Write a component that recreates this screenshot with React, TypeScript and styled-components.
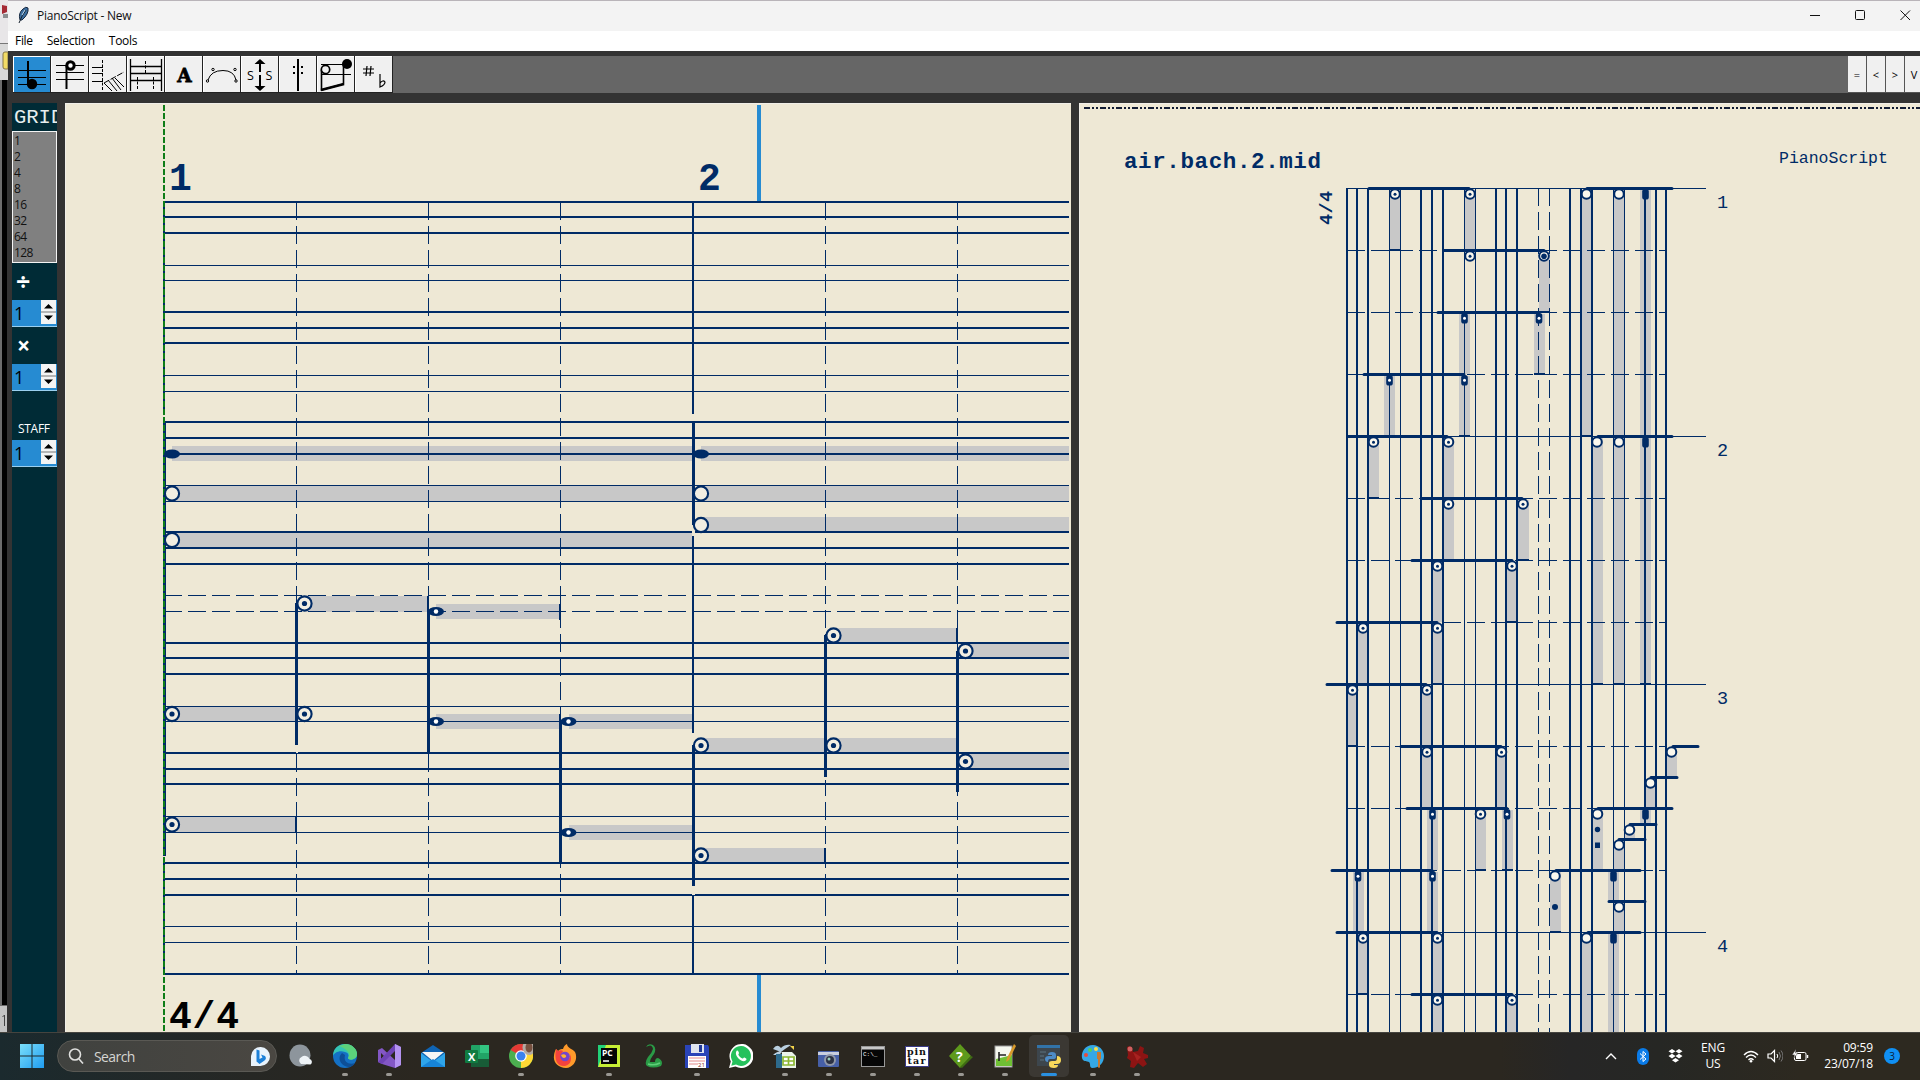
import React from "react";
import styled, { createGlobalStyle, css } from "styled-components";

const INK = "#002b66";
const PAPER = "#eee8d5";
const SHADE = "#c8c8c8";
const UI = `"Open Sans", "Noto Sans", sans-serif`;
const MONO = `"Liberation Mono", monospace`;

const Global = createGlobalStyle`
  *{box-sizing:border-box}
  html,body{margin:0;padding:0;overflow:hidden;background:#000}
  svg{display:block}
`;

const Desktop = styled.div`
  width: 1920px;
  height: 1080px;
  display: flex;
  flex-direction: column;
  font-family: ${UI};
  overflow: hidden;
`;
const Workspace = styled.div`
  height: 1032px;
  flex: none;
  display: flex;
`;
const BehindStrip = styled.div`
  width: 8px;
  flex: none;
  display: flex;
  flex-direction: column;
  background: #d9d9d9;
`;
const AppWindow = styled.div`
  flex: 1;
  min-width: 0;
  display: flex;
  flex-direction: column;
  background: #333;
  overflow: hidden;
`;
const TitleBar = styled.header`
  height: 31px;
  flex: none;
  display: flex;
  align-items: center;
  margin-right: -8px;
  padding: 0 0 2px 8px;
  background: #f3f3f3;
  border-top: 1px solid #b9b4b9;
  font-size: 12px;
  color: #111;
`;
const TitleText = styled.span`
  flex: 1;
  margin-left: 6px;
  letter-spacing: -0.25px;
`;
const WindowButton = styled.span`
  width: 45px;
  display: flex;
  justify-content: center;
`;
const MenuBar = styled.nav`
  height: 20px;
  flex: none;
  display: flex;
  align-items: center;
  gap: 14px;
  padding: 0 0 1px 7px;
  background: #fff;
  font-size: 12px;
  letter-spacing: -0.3px;
  color: #000;
`;
const ToolRow = styled.div`
  height: 52px;
  flex: none;
  display: flex;
  margin-right: -4px;
  padding: 5px 0 10px 5px;
`;
const ToolStrip = styled.div`
  flex: 1;
  display: flex;
  background: #666;
`;
const ToolButton = styled.button<{ $active?: boolean }>`
  width: 38px;
  height: 37px;
  padding: 0;
  border: 0;
  border-right: 1px solid #222;
  border-bottom: 1px solid #222;
  box-shadow: inset 1px 1px 0 #fff;
  background: ${(p) => (p.$active ? "#268bd2" : "#f0f0f0")};
`;
const Spacer = styled.div`
  flex: 1;
`;
const NarrowButton = styled.button`
  width: 19px;
  height: 37px;
  padding: 0;
  border: 0;
  border-right: 1px solid #555;
  border-bottom: 1px solid #555;
  background: #f0f0f0;
  font: 11px ${UI};
  color: #000;
  flex: none;
`;
const Body = styled.div`
  flex: 1;
  min-height: 0;
  display: flex;
  padding-left: 4px;
`;
const SidePanel = styled.aside`
  width: 45px;
  flex: none;
  overflow: hidden;
  display: flex;
  flex-direction: column;
  background: #002b36;
  color: #fff;
`;
const GridTitle = styled.div`
  height: 28px;
  flex: none;
  padding-left: 2px;
  font: 20.5px/29px ${MONO};
  color: #e6eeee;
  white-space: nowrap;
`;
const GridList = styled.div`
  height: 132px;
  flex: none;
  padding: 1px 0 0 1px;
  border: 1px solid #f4f4f4;
  background: #808080;
  font-size: 12px;
  line-height: 16px;
  letter-spacing: -0.6px;
  color: #111;
`;
const SideLabel = styled.div<{ $h: number; $size: number; $bold?: boolean; $pad: number; $top?: number }>`
  height: ${(p) => p.$h}px;
  flex: none;
  padding: ${(p) => p.$top ?? 0}px 0 0 ${(p) => p.$pad}px;
  font: ${(p) => (p.$bold ? 700 : 400)} ${(p) => p.$size}px/${(p) => p.$h - (p.$top ?? 0)}px ${UI};
  letter-spacing: ${(p) => (p.$bold ? 0 : -0.3)}px;
`;
const SpinBox = styled.div`
  height: 27px;
  flex: none;
  display: flex;
  padding-right: 1px;
  border-bottom: 1px solid #9bd0f0;
  background: #268bd2;
  color: #000;
`;
const SpinValue = styled.span`
  flex: 1;
  padding-left: 2px;
  font-size: 18px;
  line-height: 26px;
`;
const SpinArrows = styled.span`
  width: 15px;
  margin-bottom: 2px;
  display: flex;
  background: #f4f4f4;
`;
const Divider = styled.div<{ $w: number }>`
  width: ${(p) => p.$w}px;
  flex: none;
  background: #333;
`;
const Canvas = styled.div<{ $w: number }>`
  width: ${(p) => p.$w}px;
  height: 929px;
  flex: none;
  background: ${PAPER};
  box-shadow: inset 0 1px 0 #f0eee8, inset 1px 0 0 #f0eee8;
`;

const Taskbar = styled.footer`
  height: 48px;
  flex: none;
  display: flex;
  align-items: center;
  padding: 0 0 1px 10px;
  border-top: 1px solid #45443f;
  background: linear-gradient(90deg, #1b2a2e 0, #262724 250px, #2b2720 420px, #2b2720 1500px, #262626 1570px, #262724 1660px, #2d2920 1800px);
  color: #fff;
`;
const Slot = styled.div<{ $active?: boolean; $running?: boolean }>`
  width: 44px;
  height: 46px;
  flex: none;
  display: flex;
  flex-direction: column;
  align-items: center;
  padding-top: 11px;
  border-radius: 5px;
  ${(p) => p.$active && css`
    width: 40px;
    height: 42px;
    margin: 0 2px;
    padding-top: 9px;
    background: #3b3833;
  `}
`;
const Indicator = styled.i<{ $active?: boolean }>`
  width: ${(p) => (p.$active ? 16 : 6)}px;
  height: 3px;
  margin-top: 5px;
  flex: none;
  border-radius: 2px;
  background: ${(p) => (p.$active ? "#2a90e0" : "#9a9893")};
`;
const SearchPill = styled.div`
  width: 220px;
  height: 32px;
  margin: 0 2px 0 3px;
  flex: none;
  display: flex;
  align-items: center;
  padding: 0 5px 0 10px;
  border: 1px solid #5a5954;
  border-radius: 16px;
  background: linear-gradient(90deg, #40423f, #4a4742);
  font-size: 14px;
  letter-spacing: -0.6px;
  color: #d6d5d2;
`;
const SearchText = styled.span`
  flex: 1;
  margin-left: 10px;
`;
const Tray = styled.div`
  margin-left: auto;
  display: flex;
  align-items: center;
  padding-right: 20px;
`;
const TrayCell = styled.div<{ $w: number }>`
  width: ${(p) => p.$w}px;
  display: flex;
  justify-content: center;
`;
const TwoLines = styled.div<{ $w: number; $right?: boolean }>`
  width: ${(p) => p.$w}px;
  font-size: 12px;
  line-height: 16px;
  letter-spacing: -0.15px;
  text-align: ${(p) => (p.$right ? "right" : "center")};
`;
const Badge = styled.div`
  width: 16px;
  height: 16px;
  margin-left: 11px;
  border-radius: 50%;
  background: #1090f4;
  color: #0b2038;
  font-size: 10px;
  line-height: 16px;
  text-align: center;
`;

/* ---------- editor canvas ---------- */
const THICK = [202, 217, 233, 312, 328, 343, 422, 438, 454, 532, 548, 564, 643, 658, 674, 753, 769, 784, 863, 879, 895, 974];
const THIN = [265, 280, 375, 391, 485, 501, 706, 721, 816, 832, 926, 942];

type Kind = "open" | "dot" | "black" | "blackdot" | "big";
type EdNote = { x: number; y: number; end?: number; k: Kind; mark?: boolean };
const ED: EdNote[] = [
  { x: 172, y: 454, end: 692, k: "black" },
  { x: 701, y: 454, end: 1069, k: "black" },
  { x: 172, y: 493.5, end: 692, k: "open" },
  { x: 701, y: 493.5, end: 1069, k: "open" },
  { x: 172, y: 540, end: 692, k: "open" },
  { x: 701, y: 525, end: 1069, k: "open" },
  { x: 304.5, y: 603.5, end: 428, k: "dot", mark: true },
  { x: 304.5, y: 714, k: "dot" },
  { x: 172, y: 714, end: 296, k: "dot" },
  { x: 172, y: 824.5, end: 296, k: "dot", mark: true },
  { x: 436, y: 611.5, end: 560, k: "blackdot", mark: true },
  { x: 436, y: 721.5, end: 560, k: "blackdot", mark: true },
  { x: 568.5, y: 721.5, end: 692, k: "blackdot" },
  { x: 568.5, y: 832.5, end: 692, k: "blackdot" },
  { x: 701, y: 745.5, end: 825, k: "dot" },
  { x: 701, y: 855.5, end: 825, k: "dot", mark: true },
  { x: 833.5, y: 635.5, end: 957, k: "dot", mark: true },
  { x: 833.5, y: 745.5, end: 957, k: "dot" },
  { x: 965.5, y: 651, end: 1069, k: "dot" },
  { x: 965.5, y: 761.5, end: 1069, k: "dot" },
];
const STEMS: [number, number, number][] = [
  [296.5, 603, 745], [428.5, 611, 753], [560.5, 721, 863],
  [693.5, 422, 525], [693.5, 745, 886], [825.5, 635, 777], [957.5, 651, 792],
];

const EditorScore = () => (
  <svg width="1006" height="929" viewBox="65 103 1006 929">
    <g shapeRendering="crispEdges">
      {ED.filter((n) => n.end).map((n, i) => (
        <rect key={i} x={n.x} y={Math.round(n.y - 8)} width={n.end! - n.x} height={n.k.startsWith("black") ? 15 : 16} fill={SHADE} />
      ))}
      {THICK.map((y) => <rect key={y} x="164" y={y - 1} width="905" height="2" fill={INK} />)}
      {THIN.map((y) => <rect key={y} x="164" y={y} width="905" height="1" fill={INK} />)}
      {[595.5, 611.5].map((y) => (
        <g key={y} stroke={INK} strokeDasharray="18 6">
          <line x1="164" x2="693" y1={y} y2={y} />
          <line x1="693" x2="1069" y1={y} y2={y} />
        </g>
      ))}
      {[296.5, 428.5, 560.5, 825.5, 957.5].map((x) => (
        <line key={x} x1={x} x2={x} y1="202" y2="974" stroke={INK} strokeDasharray="18 6" />
      ))}
      <path d="M693 202V974M164 202V974" stroke={INK} strokeWidth="2" />
      <path d="M693 414V421M693 525V536M693 733V745M693 886V895M164 414V421M164 856V861" stroke={PAPER} strokeWidth="3" />
      <path d="M296.5 745V753M825.5 777V780" stroke={PAPER} strokeWidth="2" />
      {STEMS.map(([x, a, b], i) => <rect key={i} x={x - 1.5} y={a} width="3" height={b - a} fill={INK} />)}
      <rect x="163" y="422" width="2" height="434" fill={INK} />
      {ED.filter((n) => n.mark).map((n, i) => (
        <rect key={i} x={n.end! - 1} y={n.y - 8} width="2" height="16" fill={INK} />
      ))}
      <line x1="164" x2="164" y1="105" y2="1032" stroke="#0f7d18" strokeWidth="2" strokeDasharray="6 2" />
      <rect x="165" y="422" width="1" height="434" fill={INK} />
      <rect x="757" y="105" width="4" height="96" fill="#268bd2" />
      <rect x="757" y="975" width="4" height="57" fill="#268bd2" />
    </g>
    {ED.map((n, i) =>
      n.k.startsWith("black") ? (
        <g key={i}>
          <ellipse cx={n.x} cy={n.y} rx="8" ry="4.6" fill={INK} />
          {n.k === "blackdot" && <circle cx={n.x} cy={n.y} r="2.2" fill="#fff" />}
        </g>
      ) : (
        <g key={i}>
          <circle cx={n.x} cy={n.y} r="7.1" fill="#f2eee2" stroke={INK} strokeWidth="2.1" />
          {n.k === "dot" && <circle cx={n.x} cy={n.y} r="2.6" fill={INK} />}
        </g>
      )
    )}
    <g fontFamily={MONO} fontWeight="700" fontSize="38">
      <text x="169" y="190" fill={INK}>1</text>
      <text x="698" y="190" fill={INK}>2</text>
      <text x="169" y="1028" fill="#000" textLength="70">4/4</text>
    </g>
  </svg>
);

/* ---------- print preview ---------- */
const V2 = [1347, 1357, 1368, 1421, 1432, 1443, 1496, 1506, 1517, 1570, 1581, 1592, 1645, 1656, 1666];
const V1 = [1389, 1400, 1464, 1475, 1613, 1624];
/* beams: y, from, to */
const BEAMS: [number, number, number][] = [
  [188, 1368, 1470], [188, 1586, 1673], [250, 1443, 1545], [312, 1437, 1539], [374, 1363, 1465],
  [436, 1347, 1448], [436, 1597, 1673], [498, 1421, 1523], [560, 1411, 1513], [622, 1336, 1438],
  [684, 1326, 1427], [746, 1400, 1502], [746, 1672, 1699], [777, 1650, 1678], [808, 1406, 1508],
  [808, 1597, 1673], [824, 1629, 1657], [839, 1618, 1646], [870, 1331, 1433], [870, 1555, 1641],
  [901, 1608, 1646], [932, 1336, 1438], [932, 1587, 1641], [994, 1411, 1513],
];
/* notes: x, y, shade end (0 = none), kind, end mark */
const PN: [number, number, number, Kind, number?][] = [
  [1395, 188, 250, "dot", 1], [1470, 188, 250, "dot"], [1586.5, 188, 436, "open", 1], [1619, 188, 436, "open"], [1645.5, 188, 436, "black"],
  [1470, 250, 0, "dot"], [1544, 250, 312, "big", 1],
  [1464.5, 312, 374, "blackdot"], [1539, 312, 374, "blackdot", 1],
  [1389.5, 374, 436, "blackdot"], [1464.5, 374, 436, "blackdot", 1],
  [1373.5, 436, 498, "dot", 1], [1448.5, 436, 498, "dot"], [1597, 436, 684, "open", 1], [1619, 436, 684, "open", 1], [1645.5, 436, 684, "black", 1],
  [1448.5, 498, 560, "dot"], [1523, 498, 560, "dot", 1],
  [1437.5, 560, 622, "dot"], [1512, 560, 622, "dot", 1],
  [1363, 622, 684, "dot"], [1437.5, 622, 684, "dot", 1],
  [1352.5, 684, 746, "dot", 1], [1427, 684, 746, "dot"],
  [1427, 746, 808, "dot"], [1501.5, 746, 808, "dot"], [1671.5, 746, 777, "open"],
  [1650.5, 777, 808, "open"],
  [1432.5, 808, 870, "blackdot"], [1480.5, 808, 870, "dot", 1], [1507, 808, 870, "blackdot", 1], [1597.5, 808, 870, "open"], [1645.5, 808, 823, "black"],
  [1629.5, 824, 839, "open"], [1619, 839, 870, "open"],
  [1358, 870, 932, "blackdot"], [1432.5, 870, 932, "blackdot"], [1555, 870, 932, "open", 1], [1613.5, 870, 901, "black"],
  [1619, 901, 932, "open"],
  [1363, 932, 994, "dot", 1], [1437.5, 932, 994, "dot"], [1586.5, 932, 1032, "open"], [1613.5, 932, 1032, "black"],
  [1437.5, 994, 1032, "dot"], [1512, 994, 1032, "dot"],
];

const PreviewScore = () => (
  <svg width="841" height="929" viewBox="1079 103 841 929">
    <g shapeRendering="crispEdges">
      {PN.filter((n) => n[2]).map(([x, y, e], i) => (
        <rect key={i} x={Math.round(x - 5.5)} y={y + 2} width="10.5" height={e - y - 2} fill={SHADE} />
      ))}
      {V2.map((x) => <rect key={x} x={x - 1} y="188" width="2" height="844" fill={INK} />)}
      {V1.map((x) => <rect key={x} x={x} y="188" width="1" height="844" fill={INK} />)}
      {[1538.5, 1549.5].map((x) => <line key={x} x1={x} x2={x} y1="188" y2="1032" stroke={INK} strokeDasharray="18 6" />)}
      {[188.5, 436.5, 684.5, 932.5].map((y) => <line key={y} x1="1347" x2="1706" y1={y} y2={y} stroke={INK} />)}
      {[250.5, 312.5, 374.5, 498.5, 560.5, 622.5, 746.5, 808.5, 870.5, 994.5].map((y) => (
        <line key={y} x1="1347" x2="1667" y1={y} y2={y} stroke={INK} strokeDasharray="18 6" />
      ))}
      {PN.filter((n) => n[4]).map(([x, , e], i) => (
        <rect key={i} x={Math.round(x - 5.5)} y={e - 1} width="10.5" height="2" fill={INK} />
      ))}
      <line x1="1084" x2="1920" y1="108" y2="108" stroke="#111b33" strokeWidth="2" strokeDasharray="6 2 2 2 2 2" />
    </g>
    <path d={BEAMS.map(([y, a, b]) => `M${a + 1} ${y + 0.5}H${b - 1}`).join("")} stroke={INK} strokeWidth="3" strokeLinecap="round" fill="none" />
    {PN.map(([x, y, , k], i) => (
      <g key={i}>
        {k.startsWith("black") ? (
          <rect x={x - 3.3} y={y + 1} width="6.6" height="10.5" rx={2.6} fill={INK} />
        ) : (
          <circle cx={x} cy={y + 6} r="4.8" fill="#fbf8ee" stroke={INK} strokeWidth="2" />
        )}
        {k === "dot" && <circle cx={x} cy={y + 6.2} r="1.5" fill={INK} />}
        {k === "big" && <circle cx={x} cy={y + 6.2} r="2.8" fill={INK} />}
        {k === "blackdot" && <circle cx={x} cy={y + 6.3} r="1.5" fill="#fff" />}
      </g>
    ))}
    <circle cx="1597.5" cy="829.5" r="2.7" fill={INK} />
    <rect x="1595" y="842.5" width="5" height="5.5" fill={INK} />
    <circle cx="1555" cy="907" r="3" fill={INK} />
    <g fontFamily={MONO} fill={INK}>
      <text x="1124" y="168" fontWeight="700" fontSize="22.5" textLength="197">air.bach.2.mid</text>
      <text x="1779" y="163" fontSize="16.5">PianoScript</text>
      <text transform="translate(1331.5 225) rotate(-90)" fontWeight="700" fontSize="18.5" textLength="34">4/4</text>
      {[1, 2, 3, 4].map((n) => <text key={n} x="1717" y={207.5 + (n - 1) * 248} fontSize="18.5">{n}</text>)}
    </g>
  </svg>
);

/* ---------- toolbar glyphs ---------- */
const TOOL_ART: React.ReactNode[] = [
  <g key="0"><path d="M5 14.5H33M5 21.5H33M5 28.5H33" stroke="#000" /><path d="M15 5V28" stroke="#000" strokeWidth="2" /><circle cx="19" cy="28" r="5.2" /></g>,
  <g key="1"><path d="M5 9.5H33M5 16.5H33M5 23.5H33" stroke="#000" /><path d="M15.5 9V33" stroke="#000" strokeWidth="2" /><circle cx="19.5" cy="9.5" r="3.7" fill="#fff" stroke="#000" strokeWidth="3" /></g>,
  <g key="2" stroke="#000"><path d="M3 11.5H14M3 17.5H14M3 25.5H14" /><path d="M13.5 4V35" strokeDasharray="3 1.5" /><path d="M15 27L23 35M19 24L28 35M23 22L32 34M26 22L35 31" /><path d="M15 27L35 16" strokeDasharray="6 1.5" /></g>,
  <g key="3" stroke="#000"><path d="M3.5 3V35M34.5 3V35" strokeWidth="1.3" /><path d="M4 10.5H35M4 17.5H35M4 24.5H35" strokeWidth="1.4" /><path d="M18.5 5V17M10.5 21V34M26.5 21V34" strokeDasharray="3 1.5" /></g>,
  <text key="4" x="19.5" y="25.5" textAnchor="middle" fontFamily={`"DejaVu Serif","Liberation Serif",serif`} fontWeight="700" fontSize="18.5" stroke="#000" strokeWidth="0.8">A</text>,
  <g key="5" fill="none" stroke="#000"><path d="M5 24Q8 14.5 20 14.5Q31 14.5 33 24" /><circle cx="4.5" cy="25" r="1.2" /><circle cx="10" cy="13.5" r="1.2" /><circle cx="32" cy="13.5" r="1.2" /><circle cx="33" cy="25" r="1.2" /></g>,
  <g key="6"><path d="M19 5V16M19 19V33" stroke="#000" strokeWidth="2" /><path d="M13.5 8L19 3L24.5 8ZM13.5 30L19 35L24.5 30Z" /><text x="6" y="24" fontFamily={UI} fontSize="12.500">S</text><text x="24.500" y="24" fontFamily={UI} fontSize="12.500">S</text></g>,
  <g key="7"><path d="M19 3V35" stroke="#000" strokeWidth="2" /><path d="M14 10h2v2h-2zM14 16h2v2h-2zM22 10h2v2h-2zM22 16h2v2h-2z" /></g>,
  <g key="8"><path d="M4 8.5H33M4 18.5H34" stroke="#000" /><path d="M4.5 14V34L26.5 28V8" stroke="#000" strokeWidth="1.6" fill="none" /><path d="M4 34L27 28" stroke="#000" strokeWidth="2.8" /><circle cx="8.5" cy="13.5" r="4.2" fill="#f0f0f0" stroke="#000" strokeWidth="1.7" /><circle cx="30" cy="8" r="5" /></g>,
  <g key="9" fill="none" stroke="#000" strokeWidth="1.2"><path d="M12 10L11 20M16 10L15 20M8 13H19M8 17H19" /><path d="M25 18V31Q30 29 30 26Q28 23.5 25 27" /></g>,
];

/* ---------- taskbar icons ---------- */
const Icon = ({ children }: { children: React.ReactNode }) => <svg width="24" height="24" viewBox="0 0 24 24">{children}</svg>;

const APPS: { art: React.ReactNode; run?: boolean; active?: boolean }[] = [
  { art: <><ellipse cx="11" cy="11.5" rx="10.5" ry="11" fill="#8d959c" /><path d="M12 20a4 4 0 01.5-7 5 5 0 018 2 3 3 0 011 5.5z" fill="#eef3f7" /></> },
  { run: true, art: <><circle cx="12" cy="12" r="12" fill="#1470c4" /><path d="M0 12C0 4 6 0 12 0c7 0 12 5 12 10 0 6-8 7-9 4 1-2 1-5-3-6C6 6 1 9 0 12z" fill="#35c5b4" /><path d="M12 0c7 0 12 5 12 10 0 6-8 7-9 4 2-3 1-5 0-6C13 5 9 3 6 2z" fill="#5cd27b" /><path d="M9 9c-6 6 0 14 8 14 2-1 4-2 5-4-5 2-12 0-10-8z" fill="#0d4f97" /></> },
  { run: true, art: <><path d="M1 6l4-2 13 12V0l6 3v18l-6 3L5 20l-4-2z" fill="#8357c5" /><path d="M18 0l6 3v18l-6 3z" fill="#b493f0" /><path d="M4 9v6l3-3z" fill="#2b2720" /><path d="M1 18l17-18v7L5 20z" fill="#6e43b5" /></> },
  { art: <><path d="M0 9l12-8 12 8v14H0z" fill="#0f64b4" /><path d="M1 8h22L12 17z" fill="#f5f5f5" /><path d="M0 9l12 9 12-9v14H0z" fill="#2fa5ea" /><path d="M0 23l12-8 12 8z" fill="#1684d8" /></> },
  { art: <><rect x="6" y="1" width="18" height="22" rx="1" fill="#21a366" /><rect x="15" y="1" width="9" height="8" fill="#33c481" /><rect x="6" y="15" width="18" height="8" fill="#185c37" /><rect x="0" y="6" width="13" height="13" rx="1" fill="#107c41" /><text x="3" y="16.5" fontSize="11" fontWeight="700" fill="#fff" fontFamily={UI}>X</text></> },
  { run: true, art: <g><g><circle cx="12" cy="12" r="12" fill="#4caf50" /><path d="M12 12L1.6 6A12 12 0 0122.4 6z" fill="#e53935" /><path d="M12 12L22.4 6A12 12 0 0112 24z" fill="#fdd835" /><circle cx="12" cy="12" r="5.8" fill="#fff" /><circle cx="12" cy="12" r="4.5" fill="#3b82f0" /></g><ellipse cx="20" cy="3.500" rx="6.500" ry="7.500" fill="#b3aaa4" /><ellipse cx="20" cy="3.500" rx="3.500" ry="5" fill="#77503f" /></g> },
  { art: <><path d="M3 5l2 2c2-2 4-2 5-2 1-3 2-4 4-5 0 4 6 5 8 8 3 6 0 15-9 16C5 24 0 18 1 12c0-3 1-5 2-7z" fill="#ff9a2b" /><path d="M3 5l2 2c2-1 4-1 5 0l-2 4c3 0 3 3 1 4 4 4 9 0 8-5 3 7-1 12-6 12C4 22 1 16 3 5z" fill="#f5433d" /><circle cx="12" cy="12.5" r="4.8" fill="#7545c9" /><path d="M8 11c3-2 6 0 5 2-2 2-4 1-5-2z" fill="#ffb52c" /></> },
  { run: true, art: <><rect x="1" y="1" width="22" height="22" fill="#c6ee35" /><path d="M1 23L9 1H1z" fill="#22d278" /><rect x="4" y="4" width="16" height="16" fill="#050505" /><text x="5" y="12" fontSize="8.5" fontWeight="700" fill="#fff" fontFamily={UI}>PC</text><path d="M6 17h6" stroke="#fff" strokeWidth="1.5" /></> },
  { art: <><path d="M5 3Q11-1 12 5Q11 9 7 13Q3 19 6 22Q12 25 20 22Q23 17 17 14Q14 14 14 18H9Q9 15 13 10Q16 4 12 1Q7-1 5 3z" fill="#2a9b46" /><path d="M7 20Q13 22 19 19" stroke="#5fce78" strokeWidth="1.500" fill="none" /></> },
  { run: true, art: <><path d="M0 1h23l1 2v21H0z" fill="#2a44b8" /><rect x="6" y="0" width="13" height="9" fill="#dfe4ee" /><rect x="14" y="1" width="3" height="7" fill="#223a96" /><rect x="3" y="12" width="18" height="12" fill="#fff" /><path d="M4 14h16M4 17h16M4 20h9" stroke="#e58b8b" strokeWidth="1.2" /><text x="13" y="23" fontSize="6" fill="#822" fontFamily={UI}>21</text></> },
  { art: <><path d="M0 24l1.8-6.500A12 12 0 1112 24a12 12 0 01-5.500-1.500z" fill="#fff" /><path d="M2.300 21.700l1.200-4.300A10 10 0 1112 22a10 10 0 01-5-1.400z" fill="#25c15c" /><path d="M7.500 7c1-1 2 0 2.500 2 0 1-1 1-.5 2 1 2 2.500 3 4 3.500 1 0 1-1.500 2-1 2 1 2.500 1.500 1.500 2.800-2 2-5 .7-7-1.200C7.500 12.500 6 9.500 7.500 7z" fill="#fff" /></> },
  { run: true, art: <><path d="M0 5Q4-1 8 4Q12 0 18 1L12 5L8 8zM0 11q5-5 9-3L6 11z" fill="#b9cfe0" /><path d="M3 10h6v14H3z" fill="#2d6a8c" /><path d="M9 8h10l4 4v12H9z" fill="#eaf3ea" /><path d="M10 13h11v8H10zM10 17h11M15.500 13v8" fill="#fff" stroke="#8cb833" strokeWidth="1.700" /><path d="M17 2h4v4z" fill="#f3d34b" /></> },
  { run: true, art: <><rect x="1" y="7" width="21" height="16" rx="1" fill="#465fa7" /><rect x="1" y="8" width="21" height="3" fill="#c9cede" /><circle cx="13" cy="16" r="6" fill="#8f97a8" /><circle cx="13" cy="16" r="4" fill="#2c3144" /><circle cx="12" cy="15" r="1.500" fill="#9cb" /></> },
  { run: true, art: <><rect x="0.500" y="2.500" width="23" height="20" fill="#060606" stroke="#999" /><rect x="1" y="3" width="22" height="2.500" fill="#c8c8c8" /><text x="2" y="12" fontSize="6" fill="#fff" fontFamily={MONO}>C:\_</text></> },
  { run: true, art: <><rect x="0.500" y="2.500" width="23" height="20" fill="#fff" stroke="#3a3a88" /><g fontFamily={`"DejaVu Serif",serif`} fontSize="9.500" fontWeight="700" fill="#111"><text x="2" y="10.500" textLength="19">pin</text><text x="2.500" y="20" textLength="18">tar</text></g></> },
  { run: true, art: <><path d="M11 0l11 12-11 12L0 12z" fill="#5e9a1c" /><path d="M22 12l2 1-11 11-2-1z" fill="#3f6d13" /><text x="7" y="17.500" fontSize="14" fontWeight="700" fill="#fff" fontFamily={UI}>?</text></> },
  { run: true, art: <><rect x="2" y="2" width="17" height="21" fill="#f4f6ee" stroke="#999" /><path d="M3 15l16-4v11H3z" fill="#6fc034" /><path d="M6 8v9M6 11h7" stroke="#222" strokeWidth="1.600" /><path d="M21 0l2 2-7 14-3 2 1-4z" fill="#d99a2b" /></> },
  { active: true, art: <><rect x="0" y="1" width="23" height="21" fill="#3d464d" /><rect x="0" y="1" width="23" height="3" fill="#3273a8" /><path d="M3 8h6M3 12h4M3 16h4" stroke="#5d7280" /><path d="M8 15q0-3 4-3h3v-1h-4q0-3 4-3 4 0 4 3v2q0 2-3 2h-3q-2 0-2 3-3 0-3-3z" fill="#4d8cc8" /><path d="M20 12q4 0 4 4t-4 4h-3v1h4q0 3-4 3-5 0-5-3v-2q0-2 3-2h3q2 0 2-3z" fill="#f8d95b" /></> },
  { run: true, art: <><path d="M12 1C4 1 0 8 1 14c1 4 5 3 7 4 2 2 0 5 3 6 8 0 12-6 12-12S18 1 12 1z" fill="#35a8e6" /><circle cx="5" cy="11" r="2" fill="#e74c3c" /><circle cx="9" cy="6" r="2" fill="#57cf57" /><circle cx="15" cy="5" r="2" fill="#f8df4c" /><path d="M16 8h4v7h-1v8q-1 2-2 0v-8h-1z" fill="#c67a33" /></> },
  { run: true, art: <><path d="M2 3q3-2 5 1l1 4 5-1 2-5 4 2-1 5 5 2v3l-4 1 3 5-4 3-5-4-4 5-4-1 1-6-4-3 1-3z" fill="#8c1413" /><circle cx="5" cy="5" r="2.500" fill="#d06060" /><path d="M8 8l8 5-4 4z" fill="#a82220" /></> },
];

const Arrows = () => (
  <svg width="15" height="24"><path d="M3 8.500L7.500 4L12 8.500ZM3 15.500L7.500 20L12 15.500Z" /><path d="M0 12H15" stroke="#777" /></svg>
);
const Spinner = () => (
  <SpinBox><SpinValue>1</SpinValue><SpinArrows><Arrows /></SpinArrows></SpinBox>
);

export default function App() {
  return (
    <Desktop>
      <Global />
      <Workspace>
        <BehindStrip>
          <svg width="8" height="1032">
            <rect width="8" height="43" fill="#e8e6e8" />
            <path d="M2 5l5 1v6l-5 2z" fill="#a52a35" />
            <path d="M3 14h5v4H3z" fill="#8a8e90" />
            <path d="M0 43.500H8" stroke="#777" />
            <path d="M8 52H5q-2 0-2 2v13q0 2 2 2h3z" fill="#f2dc66" stroke="#85784a" />
            <rect y="80" width="8" height="952" fill="#6c6c6c" />
            <rect x="2" y="80" width="5" height="925" fill="#000" />
            <rect x="7" y="80" width="1" height="952" fill="#333" />
            <rect y="1006" width="7" height="26" fill="#c4c4c4" />
            <path d="M4.500 1015V1026M2.500 1017L4.500 1015" stroke="#444" fill="none" />
          </svg>
        </BehindStrip>
        <AppWindow>
          <TitleBar>
            <svg width="15" height="18" viewBox="0 0 15 18"><path d="M4 14Q2 7 7 3Q10 0 12 2Q13 8 6 14z" fill="#3d6e9e" stroke="#15273e" /><path d="M3 17Q6 9 10 4" stroke="#15202c" fill="none" /><path d="M6 9L9 4" stroke="#b8d7ef" /></svg>
            <TitleText>PianoScript - New</TitleText>
            <WindowButton><svg width="11" height="11"><path d="M0 5.500H10" stroke="#111" /></svg></WindowButton>
            <WindowButton><svg width="11" height="11"><rect x="0.500" y="0.500" width="9" height="9" rx="1" fill="none" stroke="#111" /></svg></WindowButton>
            <WindowButton><svg width="11" height="11"><path d="M0.500 0.500L10 10M10 0.500L0.500 10" stroke="#111" /></svg></WindowButton>
          </TitleBar>
          <MenuBar><span>File</span><span>Selection</span><span>Tools</span></MenuBar>
          <ToolRow>
            <ToolStrip>
              {TOOL_ART.map((art, i) => (
                <ToolButton key={i} $active={i === 0}><svg width="37" height="36">{art}</svg></ToolButton>
              ))}
              <Spacer />
              {["=", "<", ">", "V"].map((t) => <NarrowButton key={t}>{t}</NarrowButton>)}
            </ToolStrip>
          </ToolRow>
          <Body>
            <SidePanel>
              <GridTitle>GRID</GridTitle>
              <GridList>{[1, 2, 4, 8, 16, 32, 64, 128].map((n) => <div key={n}>{n}</div>)}</GridList>
              <SideLabel $h={37} $size={25} $bold $pad={4}>÷</SideLabel>
              <Spinner />
              <SideLabel $h={37} $size={23} $bold $pad={5}>×</SideLabel>
              <Spinner />
              <SideLabel $h={49} $size={12} $pad={6} $top={27}>STAFF</SideLabel>
              <Spinner />
            </SidePanel>
            <Divider $w={8} />
            <Canvas $w={1006}><EditorScore /></Canvas>
            <Divider $w={8} />
            <Canvas $w={841}><PreviewScore /></Canvas>
          </Body>
        </AppWindow>
      </Workspace>
      <Taskbar>
        <Slot>
          <svg width="24" height="24"><defs><linearGradient id="win" x1="0" y1="0" x2="1" y2="1"><stop offset="0" stopColor="#7be0fb" /><stop offset="1" stopColor="#1f9cf0" /></linearGradient></defs><path d="M0 0H11.500V11.500H0ZM12.500 0H24V11.500H12.500ZM0 12.500H11.500V24H0ZM12.500 12.500H24V24H12.500Z" fill="url(#win)" /></svg>
        </Slot>
        <SearchPill>
          <svg width="16" height="16"><circle cx="7" cy="6.500" r="5.500" fill="none" stroke="#e0e0de" strokeWidth="1.600" /><path d="M11 11L15 15.500" stroke="#e0e0de" strokeWidth="1.600" /></svg>
          <SearchText>Search</SearchText>
          <svg width="21" height="21"><path d="M1 20V10A9.500 9.500 0 1110.500 20z" fill="#e9f3fc" /><path d="M6.500 3.500l3 1V13l3-1.500-1.500-3 4 1.500q2 2.500-.5 4.500L9.500 18l-3-2.500z" fill="#1c80d8" /></svg>
        </SearchPill>
        {APPS.map((a, i) => (
          <Slot key={i} $active={a.active}>
            <Icon>{a.art}</Icon>
            {(a.run || a.active) && <Indicator $active={a.active} />}
          </Slot>
        ))}
        <Tray>
          <TrayCell $w={32}><svg width="12" height="8"><path d="M1 7L6 2L11 7" stroke="#fff" strokeWidth="1.400" fill="none" /></svg></TrayCell>
          <TrayCell $w={32}><svg width="12" height="17"><rect width="12" height="17" rx="6" fill="#0a7be8" /><path d="M3 5.500L9 11L6 13.500V3.500L9 6L3 11.500" stroke="#fff" fill="none" /></svg></TrayCell>
          <TrayCell $w={32}><svg width="15" height="14"><path d="M4 0l3.500 2.300L4 4.600.5 2.300zM11 0l3.500 2.300L11 4.600 7.500 2.300zM4 4.800l3.500 2.300L4 9.400.5 7.100zM11 4.800l3.500 2.300L11 9.400 7.500 7.100zM7.500 9l3.500 2.300-3.500 2.300L4 11.300z" fill="#fff" /></svg></TrayCell>
          <TwoLines $w={44}>ENG<br />US</TwoLines>
          <TrayCell $w={32}><svg width="16" height="13"><path d="M1 5Q8-2 15 5M3 7.500Q8 2.500 13 7.500M5.500 10Q8 7.500 10.500 10" stroke="#fff" strokeWidth="1.400" fill="none" /><circle cx="8" cy="11.300" r="1.300" fill="#fff" /></svg></TrayCell>
          <TrayCell $w={16}><svg width="17" height="14"><path d="M1 5H4L7.500 1.500V12.500L4 9H1Z" stroke="#fff" fill="none" strokeWidth="1.200" /><path d="M10 5Q11.500 7 10 9" stroke="#fff" fill="none" /><path d="M12 3Q15 7 12 11M14 1.500Q18 7 14 12.500" stroke="#777" fill="none" /></svg></TrayCell>
          <TrayCell $w={34}><svg width="17" height="14"><rect x="2.500" y="3.500" width="11.500" height="8" rx="1.500" fill="none" stroke="#fff" /><rect x="4" y="5" width="5" height="5" fill="#fff" /><path d="M15.500 6V9" stroke="#fff" strokeWidth="1.500" /><path d="M4 0L0 6h3L1 10l5-6H3.500z" fill="#fff" stroke="#2b2720" strokeWidth=".5" /></svg></TrayCell>
          <TwoLines $w={56} $right>09:59<br />23/07/18</TwoLines>
          <Badge>3</Badge>
        </Tray>
      </Taskbar>
    </Desktop>
  );
}
